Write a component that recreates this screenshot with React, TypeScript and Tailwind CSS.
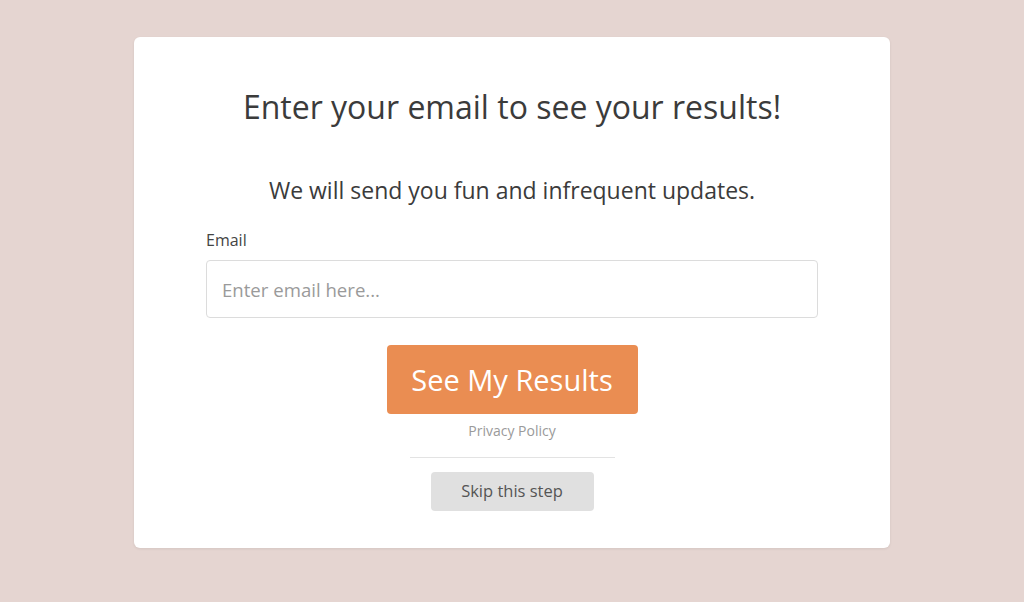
export default function App() {
  return (
    <div className="flex h-[602px] w-full items-start justify-center bg-[#e5d5d1] pt-[37px] font-['Open_Sans',sans-serif]">
      <div className="flex h-[511px] w-[756px] flex-col items-center rounded-md bg-white shadow-[0_1px_3px_rgba(0,0,0,0.08)]">
        <h1 className="mt-[48px] text-[32px] leading-[44px] text-[#3b3b3b]">
          Enter your email to see your results!
        </h1>
        <p className="mt-[46px] text-[23px] leading-[30px] text-[#3b3b3b]">
          We will send you fun and infrequent updates.
        </p>
        <div className="mt-[24px] w-[612px]">
          <label className="block text-[16px] leading-[22px] text-[#444]">Email</label>
          <input
            type="email"
            placeholder="Enter email here..."
            className="mt-[9px] h-[58px] w-full rounded-[4px] border border-[#dcdcdc] px-[15px] text-[18.6px] text-[#333] outline-none placeholder:text-[#9a9a9a]"
          />
        </div>
        <button className="mt-[27px] h-[69px] w-[251px] rounded-[4px] bg-[#ea8d52] text-[29px] text-white">
          See My Results
        </button>
        <a className="mt-[7px] text-[14px] leading-[20px] text-[#9a9a9a]">Privacy Policy</a>
        <div className="mt-[16px] h-px w-[205px] bg-[#e3e3e3]" />
        <button className="mt-[14px] h-[39px] w-[163px] rounded-[4px] bg-[#e0e0e0] text-[16.5px] text-[#555]">
          Skip this step
        </button>
      </div>
    </div>
  );
}
